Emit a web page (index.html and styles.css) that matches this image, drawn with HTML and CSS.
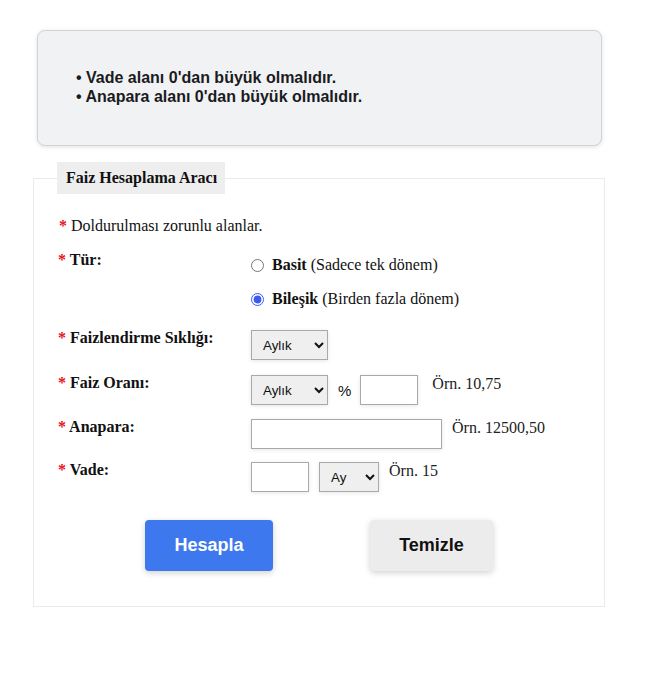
FILE: index.html
```html
<!DOCTYPE html>
<html lang="tr">
<head>
<meta charset="utf-8">
<title>Faiz Hesaplama Aracı</title>
<link rel="stylesheet" href="styles.css">
</head>
<body>
<div class="page">
  <div class="errors">
    <div class="err-line">• Vade alanı 0'dan büyük olmalıdır.</div>
    <div class="err-line">• Anapara alanı 0'dan büyük olmalıdır.</div>
  </div>

  <fieldset class="calc">
    <legend class="calc-title">Faiz Hesaplama Aracı</legend>
    <p class="note"><span class="req">*</span> Doldurulması zorunlu alanlar.</p>

    <div class="row row-type">
      <label class="lbl"><span class="req">*</span> Tür:</label>
      <div class="radios">
        <label class="radio"><input type="radio" name="tur"> <b>Basit</b> (Sadece tek dönem)</label>
        <label class="radio"><input type="radio" name="tur" checked> <b>Bileşik</b> (Birden fazla dönem)</label>
      </div>
    </div>

    <div class="row">
      <label class="lbl"><span class="req">*</span> Faizlendirme Sıklığı:</label>
      <div class="ctrl">
        <select class="sel sel-w"><option>Aylık</option></select>
      </div>
    </div>

    <div class="row">
      <label class="lbl"><span class="req">*</span> Faiz Oranı:</label>
      <div class="ctrl">
        <select class="sel sel-w"><option>Aylık</option></select>
        <span class="pct">%</span>
        <input class="inp inp-s" type="text">
        <span class="hint">Örn. 10,75</span>
      </div>
    </div>

    <div class="row row-anapara">
      <label class="lbl"><span class="req">*</span> Anapara:</label>
      <div class="ctrl">
        <input class="inp inp-l" type="text">
        <span class="hint hint-a">Örn. 12500,50</span>
      </div>
    </div>

    <div class="row row-vade">
      <label class="lbl"><span class="req">*</span> Vade:</label>
      <div class="ctrl">
        <input class="inp inp-s" type="text">
        <select class="sel sel-ay"><option>Ay</option></select>
        <span class="hint hint-v">Örn. 15</span>
      </div>
    </div>

    <div class="actions">
      <button class="btn btn-primary" type="button">Hesapla</button>
      <button class="btn btn-secondary" type="button">Temizle</button>
    </div>
  </fieldset>
</div>
</body>
</html>
```
FILE: styles.css
```css
html, body {
  margin: 0;
  padding: 0;
  background: #fff;
}
body {
  font-family: "Liberation Serif", "Times New Roman", serif;
  font-size: 16px;
  color: #111;
}
.page {
  padding: 30px 0 0 33px;
  width: 572px;
}
.errors {
  margin-left: 4px;
  width: 565px;
  box-sizing: border-box;
  height: 116px;
  padding: 37px 0 0 38px;
  background: #f1f2f4;
  border: 1px solid #d3d3d5;
  border-radius: 8px;
  box-shadow: 0 1px 4px rgba(0,0,0,0.12);
  font-family: "Liberation Sans", Arial, sans-serif;
  font-weight: bold;
  font-size: 16px;
  line-height: 19px;
  color: #1b1b1f;
}
.calc {
  margin: 16px 0 0 0;
  padding: 0 0 35px 24px;
  border: 1px solid #ebebeb;
  width: 572px;
  box-sizing: border-box;
}
.calc-title {
  margin-left: -1px;
  padding: 0 8px 0 9px;
  height: 32px;
  line-height: 32px;
  background: #eeeeee;
  font-weight: bold;
  font-size: 16px;
  color: #111;
}
.note {
  margin: 22px 0 0 1px;
  line-height: 20px;
}
.req {
  color: #e8141c;
  font-weight: bold;
}
.row {
  display: flex;
  align-items: flex-start;
  margin-top: 14px;
}
.row-type {
  margin-top: 15px;
}
.row-anapara { margin-top: 13px; }
.row-vade { margin-top: 12px; }
.lbl {
  width: 193px;
  flex: none;
  font-weight: bold;
  line-height: 18px;
}
.radios {
  display: flex;
  flex-direction: column;
  gap: 16px;
  padding-top: 5px;
  margin-bottom: 7px;
}
.radio {
  display: flex;
  align-items: center;
  line-height: 18px;
  white-space: pre;
}
.radio input {
  margin: 0 8px 0 0;
  width: 13px;
  height: 13px;
  accent-color: #3b5bf0;
}
.ctrl {
  display: flex;
  align-items: flex-start;
  padding-top: 1px;
}
.sel {
  height: 30px;
  box-sizing: border-box;
  border: 1px solid #a9a9a9;
  background-color: #efefef;
  font-family: "Liberation Sans", Arial, sans-serif;
  font-size: 13.33px;
  color: #111;
  padding: 0 4px 0 7px;
  box-shadow: 0 1px 4px rgba(0,0,0,0.1);
  border-radius: 0;
}
.sel-w { width: 77px; }
.sel-ay { width: 60px; margin-left: 10px; }
.inp {
  height: 30px;
  box-sizing: border-box;
  border: 1px solid #a9a9a9;
  background: #fff;
  box-shadow: 0 1px 4px rgba(0,0,0,0.1);
  padding: 0 4px;
  border-radius: 0;
}
.inp-s { width: 58px; }
.inp-l { width: 191px; }
.pct {
  font-family: "Liberation Sans", Arial, sans-serif;
  font-size: 15px;
  margin: 7px 9px 0 10px;
}
.hint {
  margin-left: 14px;
  line-height: 18px;
  color: #222;
}
.hint-a { margin-left: 10px; }
.hint-v { margin-left: 10px; }
.actions {
  display: flex;
  justify-content: center;
  gap: 97px;
  margin-top: 28px;
  padding-right: 24px;
}
.btn {
  height: 51px;
  border: none;
  border-radius: 4px;
  font-family: "Liberation Sans", Arial, sans-serif;
  font-weight: bold;
  font-size: 18px;
  cursor: pointer;
  box-shadow: 0 2px 6px rgba(0,0,0,0.18);
}
.btn-primary {
  width: 128px;
  background: #3d78ee;
  color: #fff;
}
.btn-secondary {
  width: 123px;
  background: #ececec;
  color: #111;
}
```
